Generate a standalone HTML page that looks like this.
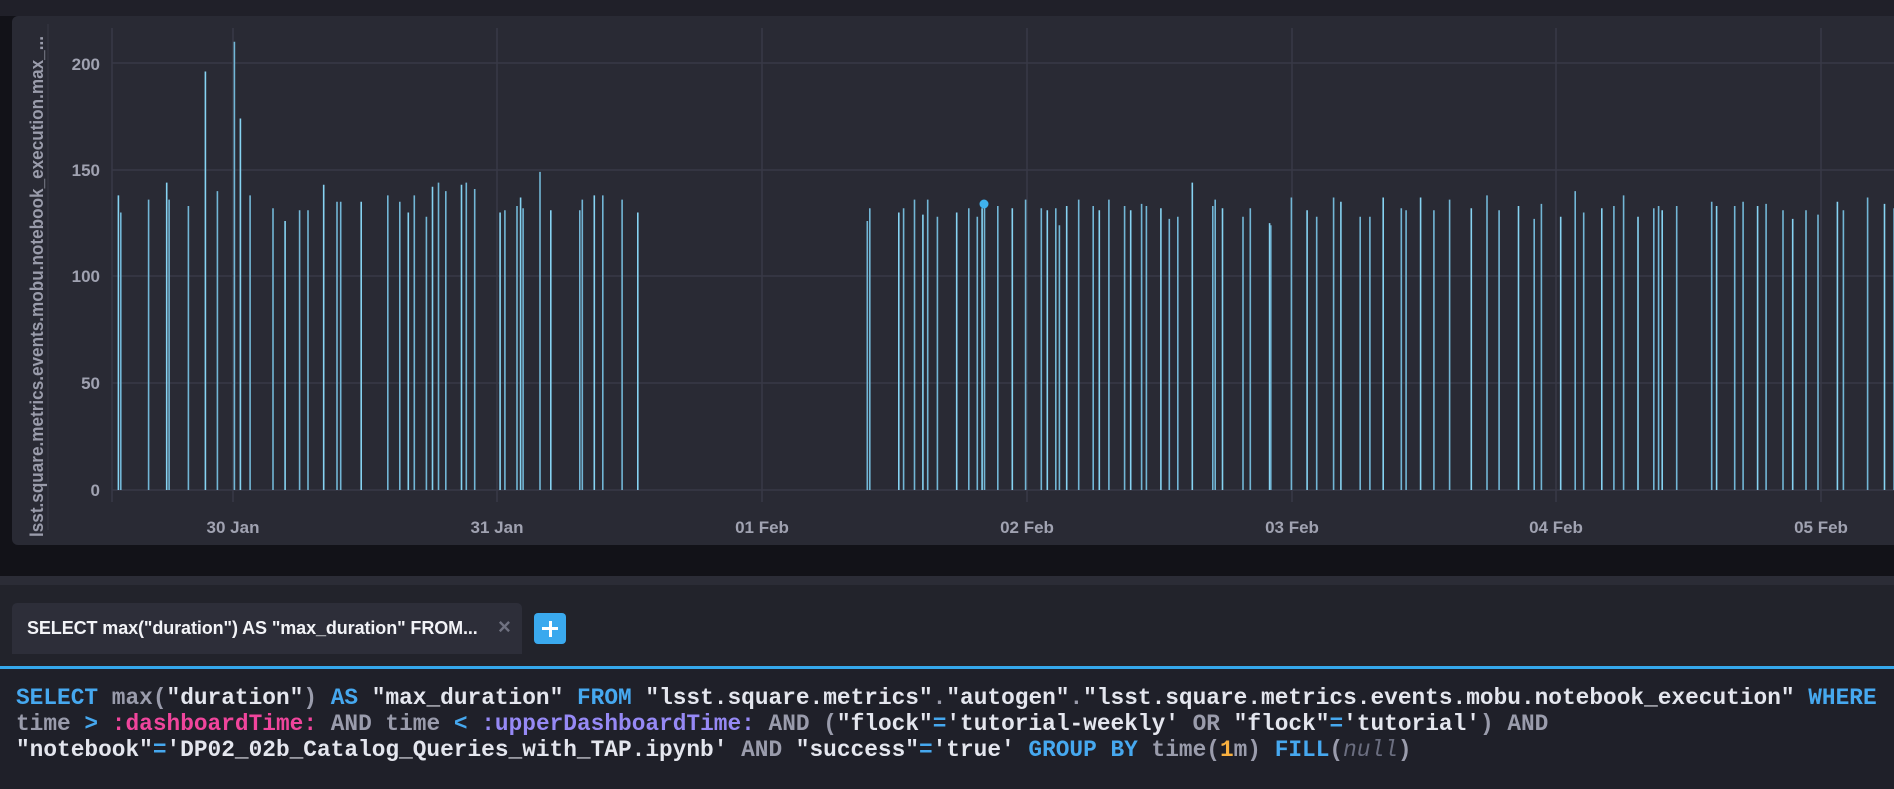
<!DOCTYPE html>
<html><head><meta charset="utf-8"><style>
html,body{margin:0;padding:0;width:1894px;height:776px;overflow:hidden;background:#121218;font-family:"Liberation Sans",sans-serif;}
#top{position:absolute;left:0;top:0;width:1894px;height:16px;background:#202029;}
#panel{position:absolute;left:12px;top:16px;width:1900px;height:529px;background:#292a34;border-radius:6px;}
#band{position:absolute;left:0;top:576px;width:1894px;height:9px;background:#2b2c36;}
#tabbar{position:absolute;left:0;top:585px;width:1894px;height:82px;background:#22232b;}
#tab{position:absolute;left:12px;top:603px;width:510px;height:51px;background:#2d2e39;border-radius:5px 5px 0 0;}
#tab span{position:absolute;left:15px;top:15px;color:#f2f3f7;font-weight:bold;font-size:18px;letter-spacing:-0.1px;white-space:nowrap;}
#tab i{position:absolute;left:486px;top:11px;color:#6f7180;font-style:normal;font-size:22px;font-weight:bold;}
#plus{position:absolute;left:534px;top:613px;width:32px;height:31px;background:#3aa9ee;border-radius:4px;}
#plus:before{content:"";position:absolute;left:8px;top:14px;width:16px;height:3px;background:#fff;}
#plus:after{content:"";position:absolute;left:14.5px;top:7.5px;width:3px;height:16px;background:#fff;}
#line{position:absolute;left:0;top:666px;width:1894px;height:3px;background:#35a8ec;}
#q{position:absolute;left:0;top:669px;width:1894px;height:120px;background:#1f2029;}
#q pre{margin:0;position:absolute;left:16px;top:16px;font-family:"Liberation Mono",monospace;font-weight:bold;font-size:22.8px;line-height:26px;color:#e4e6ee;}
.k{color:#46a8ef}.g{color:#9a9cac}.p{color:#f0459c}.v{color:#9689f5}.o{color:#f8b03f}.n{color:#6b6e80;font-style:italic;font-weight:normal}
svg text{font-family:"Liberation Sans",sans-serif;font-weight:bold;}
</style></head><body>
<div id="top"></div>
<div id="panel"></div>
<svg id="chart" width="1894" height="560" style="position:absolute;left:0;top:0">
<line x1="48" y1="24" x2="48" y2="530" stroke="#30313c" stroke-width="2"/>
<g stroke="#383946" stroke-width="1.5">
<line x1="112" y1="63" x2="1894" y2="63"/>
<line x1="112" y1="170" x2="1894" y2="170"/>
<line x1="112" y1="276" x2="1894" y2="276"/>
<line x1="112" y1="383" x2="1894" y2="383"/>
<line x1="112" y1="490" x2="1894" y2="490"/>
<line x1="112" y1="28" x2="112" y2="502"/>
<line x1="233" y1="28" x2="233" y2="502"/>
<line x1="497" y1="28" x2="497" y2="502"/>
<line x1="762" y1="28" x2="762" y2="502"/>
<line x1="1027" y1="28" x2="1027" y2="502"/>
<line x1="1292" y1="28" x2="1292" y2="502"/>
<line x1="1556" y1="28" x2="1556" y2="502"/>
<line x1="1821" y1="28" x2="1821" y2="502"/>
</g>
<g fill="#a0a2b1" font-size="17" text-anchor="end">
<text x="100" y="70">200</text><text x="100" y="176">150</text><text x="100" y="282">100</text><text x="100" y="389">50</text><text x="100" y="496">0</text>
</g>
<g fill="#a0a2b1" font-size="17" text-anchor="middle">
<text x="233" y="533">30 Jan</text><text x="497" y="533">31 Jan</text><text x="762" y="533">01 Feb</text><text x="1027" y="533">02 Feb</text><text x="1292" y="533">03 Feb</text><text x="1556" y="533">04 Feb</text><text x="1821" y="533">05 Feb</text>
</g>
<text transform="translate(43,537) rotate(-90)" fill="#9a9cab" font-size="18" textLength="501" lengthAdjust="spacingAndGlyphs">lsst.square.metrics.events.mobu.notebook_execution.max_...</text>
<g id="bars"></g>
<circle cx="984" cy="204" r="4.5" fill="#3fb3ef"/>
</svg>
<div id="band"></div>
<div id="tabbar"></div>
<div id="tab"><span>SELECT max("duration") AS "max_duration" FROM...</span><i>×</i></div>
<div id="plus"></div>
<div id="line"></div>
<div id="q"><pre><span class="k">SELECT</span> <span class="g">max(</span>"duration"<span class="g">)</span> <span class="k">AS</span> "max_duration" <span class="k">FROM</span> "lsst.square.metrics"<span class="g">.</span>"autogen"<span class="g">.</span>"lsst.square.metrics.events.mobu.notebook_execution" <span class="k">WHERE</span>
<span class="g">time</span> <span class="k">&gt;</span> <span class="p">:dashboardTime:</span> <span class="g">AND time</span> <span class="k">&lt;</span> <span class="v">:upperDashboardTime:</span> <span class="g">AND (</span>"flock"<span class="k">=</span>'tutorial-weekly' <span class="g">OR</span> "flock"<span class="k">=</span>'tutorial'<span class="g">) AND</span>
"notebook"<span class="k">=</span>'DP02_02b_Catalog_Queries_with_TAP.ipynb' <span class="g">AND</span> "success"<span class="k">=</span>'true' <span class="k">GROUP BY</span> <span class="g">time(</span><span class="o">1</span><span class="g">m)</span> <span class="k">FILL</span><span class="g">(</span><span class="n">null</span><span class="g">)</span></pre></div>
<script>
var d=[98,138,100,130,123,136,138,144,140,136,156,133,170,196,180,140,194,210,199,174,207,138,226,132,236,126,248,131,255,131,268,143,279,135,282,135,299,135,321,138,331,135,338,130,343,138,353,128,358,142,363,144,369,140,382,143,386,144,393,141,414,130,418,131,428,133,431,137,433,132,447,149,456,131,480,131,482,136,492,138,499,138,515,136,528,130,
718,126,720,132,744,130,748,132,757,136,764,129,768,136,776,128,792,130,802,132,809,128,813,132,815,134,826,133,838,132,849,136,862,132,867,131,874,132,877,124,883,133,893,136,905,133,910,131,918,136,931,133,936,131,945,134,949,133,961,132,968,127,975,128,987,144,1004,133,1006,136,1012,132,1029,128,1035,132,1051,125,1052,124,1069,137,1082,131,1090,128,1104,137,1110,135,1126,128,1134,128,1145,137,1160,132,1164,131,1176,137,1187,131,1200,136,1218,132,1231,138,1241,131,1257,133,1270,127,1276,134,1292,128,1304,140,1311,130,1326,132,1336,133,1344,138,1356,128,1369,132,1373,133,1376,131,1388,133,1417,135,1421,133,1436,133,1443,135,1455,133,1462,134,1476,131,1484,127,1495,131,1505,129,1521,135,1526,131,1546,137,1560,134,1568,132];
var s='';for(var i=0;i<d.length;i+=2){var x=(d[i]*1.208).toFixed(1),y=(490-d[i+1]*2.135).toFixed(1);var c=(i/2)%3==0?'#86d3f2':'#72b6d6';s+='<line x1="'+x+'" y1="'+y+'" x2="'+x+'" y2="490" stroke="'+c+'" stroke-width="1.6"/>';}
document.getElementById('bars').innerHTML=s;
</script>
</body></html>
